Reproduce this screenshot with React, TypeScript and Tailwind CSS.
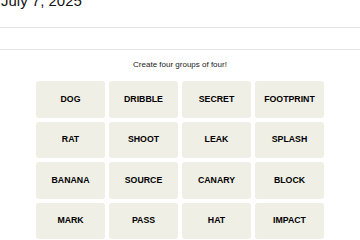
const words = [
  "DOG", "DRIBBLE", "SECRET", "FOOTPRINT",
  "RAT", "SHOOT", "LEAK", "SPLASH",
  "BANANA", "SOURCE", "CANARY", "BLOCK",
  "MARK", "PASS", "HAT", "IMPACT",
]

export default function App() {
  return (
    <div className="w-[360px] h-[240px] overflow-hidden bg-white font-['Liberation_Sans',Arial,sans-serif] text-[#121212]">
      {/* Date header, cut off at the top */}
      <div className="mt-[-7px] pl-[1px] text-[15px] leading-[16px]">July 7, 2025</div>

      {/* Toolbar strip */}
      <div className="mt-[18px] h-[23px] border-y border-[#e4e4e4]" />

      <p className="mt-[10px] text-center text-[8px] leading-[10px] text-[#222]">Create four groups of four!</p>

      {/* Word grid */}
      <div className="mt-[11px] grid grid-cols-[repeat(4,69px)] justify-center gap-x-[4px] gap-y-[4px]">
        {words.map((word) => (
          <button
            key={word}
            className="h-[36.5px] rounded-[3px] bg-[#efefe6] text-[8.75px] font-bold uppercase text-black"
          >
            {word}
          </button>
        ))}
      </div>
    </div>
  )
}
